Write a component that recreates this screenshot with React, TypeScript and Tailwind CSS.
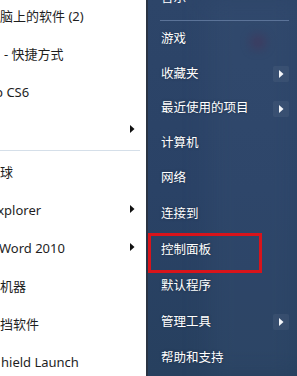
import React from "react";

const font = { fontFamily: '"Noto Sans", "Noto Sans CJK SC", sans-serif' };

function BlackArrow() {
  return (
    <svg width="5" height="8" viewBox="0 0 5 8" className="block">
      <path d="M0 0 L4.5 4 L0 8 Z" fill="#111" />
    </svg>
  );
}

function WhiteArrow() {
  return (
    <div className="w-[16px] h-[16px] flex items-center justify-center bg-white/5 rounded-[2px]">
      <svg width="5" height="8" viewBox="0 0 5 8" className="block">
        <path d="M0 0 L4.5 4 L0 8 Z" fill="#f4f6fa" />
      </svg>
    </div>
  );
}

type LeftRow = { text: string; ml: number; arrow?: boolean };

const leftTop: LeftRow[] = [
  { text: "脑上的软件 (2)", ml: 0 },
  { text: "- 快捷方式", ml: 4 },
  { text: "p CS6", ml: -5 },
  { text: "", ml: 0, arrow: true },
];

const leftBottom: LeftRow[] = [
  { text: "球", ml: 0 },
  { text: "Explorer", ml: -10, arrow: true },
  { text: "Word 2010", ml: -1, arrow: true },
  { text: "机器", ml: 0 },
  { text: "挡软件", ml: 0 },
  { text: "hield Launch", ml: 1 },
];

function LeftItem({ row }: { row: LeftRow }) {
  return (
    <div className="h-[38px] flex items-center overflow-hidden pr-[11px]">
      <div className="flex-1 min-w-0 overflow-hidden whitespace-nowrap">
        <span className="text-[13px] text-[#1e1e1e] inline-block" style={{ marginLeft: row.ml }}>
          {row.text}
        </span>
      </div>
      {row.arrow ? <BlackArrow /> : null}
    </div>
  );
}

type RightRow = { text: string; h: number; arrow?: boolean; boxed?: boolean };

const rightRows: RightRow[] = [
  { text: "游戏", h: 35 },
  { text: "收藏夹", h: 34, arrow: true },
  { text: "最近使用的项目", h: 35, arrow: true },
  { text: "计算机", h: 35 },
  { text: "网络", h: 35 },
  { text: "连接到", h: 36 },
  { text: "控制面板", h: 36, boxed: true },
  { text: "默认程序", h: 36 },
  { text: "管理工具", h: 36, arrow: true },
  { text: "帮助和支持", h: 36 },
];

function RightItem({ row }: { row: RightRow }) {
  return (
    <div className="relative flex items-center pl-[13px] pr-[8px]" style={{ height: row.h }}>
      <span className="flex-1 text-[12.5px] text-white whitespace-nowrap [text-shadow:0_0_3px_rgba(0,0,0,0.35)]">
        {row.text}
      </span>
      {row.arrow ? <WhiteArrow /> : null}
      {row.boxed ? (
        <div className="absolute left-0 top-[1px] w-[114px] h-[40px] border-[3px] border-[#d8141b]" />
      ) : null}
    </div>
  );
}

export default function App() {
  return (
    <div className="w-[297px] h-[376px] overflow-hidden flex" style={font}>
      <div className="w-[146px] h-full bg-white overflow-hidden">
        <div className="mt-[-4px]">
          {leftTop.map((r, i) => (
            <LeftItem key={i} row={r} />
          ))}
        </div>
        <div className="h-[4px] flex flex-col justify-end pr-[6px]">
          <div className="h-px bg-[#d5dfe9] mb-[1px]" />
        </div>
        <div>
          {leftBottom.map((r, i) => (
            <LeftItem key={i} row={r} />
          ))}
        </div>
      </div>
      <div className="w-[2px] h-full bg-[#2a3444]" />
      <div className="relative flex-1 h-full overflow-hidden bg-[linear-gradient(180deg,#2d4569_0%,#2a4266_50%,#27405f_100%)]">
        <div className="absolute left-[102px] top-[34px] w-[16px] h-[16px] rounded-full bg-[#4a2a4e]/60 blur-[5px]" />
        <div className="absolute left-[60px] top-[0px] w-[90px] h-[376px] bg-[#3a5478]/25 blur-[12px]" />
        <div className="relative">
          <div className="mt-[-19px] h-[35px] flex items-center pl-[13px]">
            <span className="text-[12.5px] text-white">音乐</span>
          </div>
          <div className="h-[6px] pt-[4px] pl-[12px] pr-[8px]">
            <div className="h-px bg-[#5b7398]" />
          </div>
          {rightRows.map((r, i) => (
            <RightItem key={i} row={r} />
          ))}
        </div>
      </div>
    </div>
  );
}
